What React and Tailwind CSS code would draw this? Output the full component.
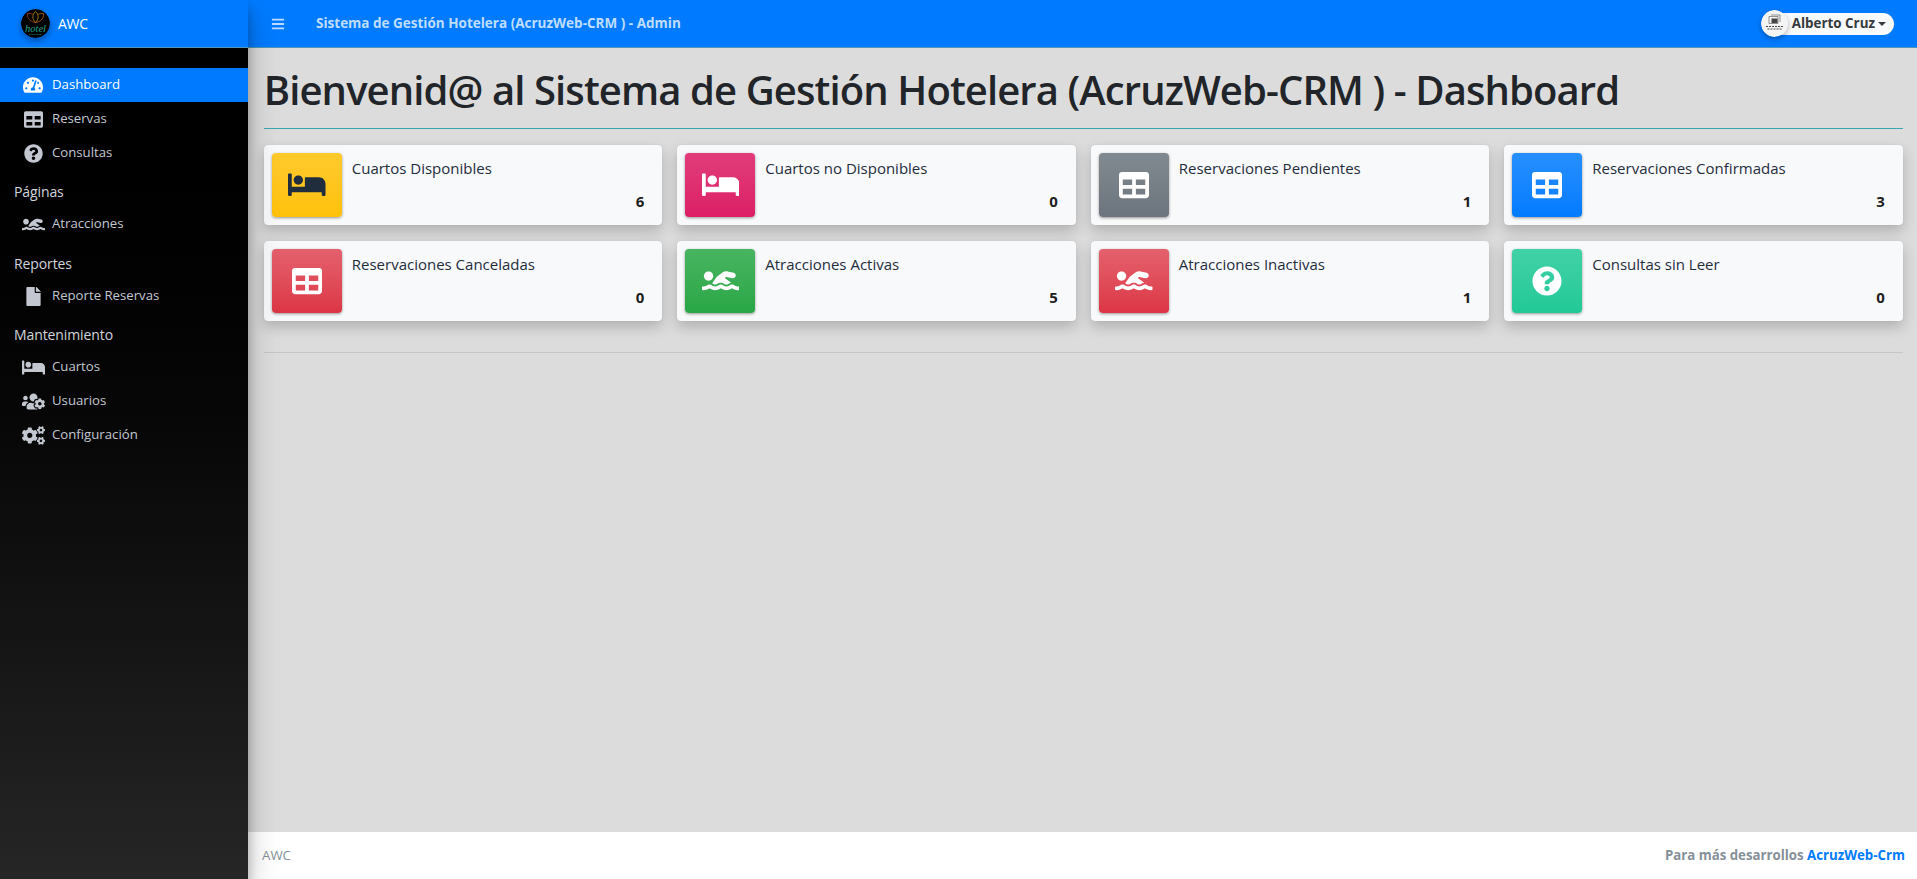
import React from 'react';
import {
  FaBars,
  FaBed,
  FaCogs,
  FaFile,
  FaQuestionCircle,
  FaSwimmer,
  FaTable,
  FaTachometerAlt,
  FaUsersCog,
} from 'react-icons/fa';

const sidebar = [
  { type: 'item', label: 'Dashboard', icon: FaTachometerAlt, size: 'text-[20px]', active: true },
  { type: 'item', label: 'Reservas', icon: FaTable, size: 'text-[19px]' },
  { type: 'item', label: 'Consultas', icon: FaQuestionCircle, size: 'text-[19px]' },
  { type: 'header', label: 'Páginas', height: 'h-[37px] pt-[11px]' },
  { type: 'item', label: 'Atracciones', icon: FaSwimmer, size: 'text-[23px]' },
  { type: 'header', label: 'Reportes', height: 'h-[38px] pt-[12px]' },
  { type: 'item', label: 'Reporte Reservas', icon: FaFile, size: 'text-[19px]' },
  { type: 'header', label: 'Mantenimiento', height: 'h-[37px] pt-[11px]' },
  { type: 'item', label: 'Cuartos', icon: FaBed, size: 'text-[23px]' },
  { type: 'item', label: 'Usuarios', icon: FaUsersCog, size: 'text-[23px]' },
  { type: 'item', label: 'Configuración', icon: FaCogs, size: 'text-[23px]' },
];

const cards = [
  { title: 'Cuartos Disponibles', value: 6, icon: FaBed, size: 'text-[37.5px]', box: 'from-[#ffca2c] to-[#ffc107] text-[#1f2d3d]' },
  { title: 'Cuartos no Disponibles', value: 0, icon: FaBed, size: 'text-[37.5px]', box: 'from-[#e23c7b] to-[#dc1e66] text-white' },
  { title: 'Reservaciones Pendientes', value: 1, icon: FaTable, size: 'text-[30px]', box: 'from-[#828a91] to-[#6c757d] text-white' },
  { title: 'Reservaciones Confirmadas', value: 3, icon: FaTable, size: 'text-[30px]', box: 'from-[#268fff] to-[#007bff] text-white' },
  { title: 'Reservaciones Canceladas', value: 0, icon: FaTable, size: 'text-[30px]', box: 'from-[#e4606d] to-[#dc3545] text-white' },
  { title: 'Atracciones Activas', value: 5, icon: FaSwimmer, size: 'text-[37.5px]', box: 'from-[#48b461] to-[#28a745] text-white' },
  { title: 'Atracciones Inactivas', value: 1, icon: FaSwimmer, size: 'text-[37.5px]', box: 'from-[#e4606d] to-[#dc3545] text-white' },
  { title: 'Consultas sin Leer', value: 0, icon: FaQuestionCircle, size: 'text-[30px]', box: 'from-[#41d1a7] to-[#20c997] text-white' },
];

const HotelLogo = () => (
  <svg viewBox="0 0 29 29" className="w-[29px] h-[29px] rounded-full shadow-[0_3px_6px_rgba(0,0,0,0.35)]">
    <circle cx="14.5" cy="14.5" r="14.5" fill="#000" />
    <path d="M14.5 2.5 C18 5.5 18 10 14.5 13.5 C11 10 11 5.5 14.5 2.5Z" fill="none" stroke="#d8a020" strokeWidth="0.7" />
    <path d="M14.5 13.5 C10 13 6 10 6.5 4.5 C8.5 4 10.5 4.5 12 5.5" fill="none" stroke="#c2452f" strokeWidth="0.7" />
    <path d="M14.5 13.5 C19 13 23 10 22.5 4.5 C20.5 4 18.5 4.5 17 5.5" fill="none" stroke="#d87a20" strokeWidth="0.7" />
    <text x="14.5" y="23" textAnchor="middle" fontSize="10.5" fontStyle="italic" fill="#1fa58d" fontFamily="'Liberation Serif', serif">hotel</text>
    <path d="M8 25.5h13" stroke="#1fa58d" strokeWidth="0.6" strokeDasharray="1 0.6" />
  </svg>
);

const Avatar = () => (
  <svg viewBox="0 0 27 27" className="w-[27px] h-[27px] rounded-full shadow-[0_2px_5px_rgba(0,0,0,0.3)] shrink-0 relative z-10">
    <circle cx="13.5" cy="13.5" r="13.5" fill="#f4f4f4" />
    <path d="M8 6.5h9v7H8z M10 5h9v7" fill="none" stroke="#666" strokeWidth="0.7" />
    <path d="M10.5 8.5h6v4.5h-6z" fill="#444" />
    <path d="M5 16.5h17M6.5 19h14" stroke="#444" strokeWidth="1" strokeDasharray="2 1" />
  </svg>
);

const Sidebar = () => (
  <aside className="w-[248px] shrink-0 flex flex-col bg-gradient-to-b from-[#000000] to-[#262626] shadow-[0_14px_28px_rgba(0,0,0,0.25),0_10px_10px_rgba(0,0,0,0.22)] z-10">
    <div className="h-[48px] bg-[#007bff] flex items-center pl-[21px] gap-2 border-b border-[#4b9ab8]">
      <HotelLogo />
      <span className="text-white text-[14px] tracking-[-0.3px]">AWC</span>
    </div>
    <nav className="pt-5 flex flex-col text-[13.2px]">
      {sidebar.map((entry) =>
        entry.type === 'header' ? (
          <div key={entry.label} className={`${entry.height} pl-[14px] leading-[21px] text-[14px] tracking-[-0.1px] text-[#d0d4db]`}>
            {entry.label}
          </div>
        ) : (
          <div
            key={entry.label}
            className={`h-[34px] flex items-center ${entry.active ? 'bg-[#007bff] text-white' : 'text-[#c2c7d0]'}`}
          >
            <span className={`w-[24px] ml-[21px] mr-[7px] flex justify-center shrink-0 ${entry.size}`}>
              <entry.icon />
            </span>
            <span className="-mt-[1px]">{entry.label}</span>
          </div>
        ),
      )}
    </nav>
  </aside>
);

const InfoCard = ({ title, value, icon: Icon, size, box }) => (
  <div className="h-[80px] rounded bg-[#f8f9fa] p-2 flex shadow-[0_0_1px_rgba(0,0,0,0.125),0_6px_14px_rgba(0,0,0,0.2)]">
    <div className={`w-[70px] h-[64px] shrink-0 rounded bg-gradient-to-b shadow-[0_1px_3px_rgba(0,0,0,0.4)] flex items-center justify-center ${size} ${box}`}>
      <Icon />
    </div>
    <div className="flex-1 pl-[10px] pr-[10px] flex flex-col text-[#1f2d3d]">
      <span className="text-[15px] leading-6 mt-[3px]">{title}</span>
      <span className="mt-auto text-right text-[15px] leading-[21px] font-bold text-black/90 mb-[5px]">{value}</span>
    </div>
  </div>
);

export default function App() {
  return (
    <div className="h-screen w-full flex overflow-hidden bg-[#dcdcdc] font-['Open_Sans','Noto_Sans',sans-serif] text-[#212529]">
      <Sidebar />
      <div className="flex-1 min-w-0 flex flex-col">
        <header className="h-[48px] shrink-0 bg-[#007bff] border-b border-[#4b9ab8] flex items-center pl-[23px] pr-[23px]">
          <FaBars className="text-white/75 text-[14px]" />
          <span className="ml-[31px] text-[13.5px] font-bold text-white/75">
            Sistema de Gestión Hotelera (AcruzWeb-CRM ) - Admin
          </span>
          <div className="ml-auto flex items-center">
            <Avatar />
            <div className="h-[22px] -ml-[8px] pl-[12px] pr-[8px] rounded-r-full bg-[#f8f9fa] flex items-center gap-[3px] text-[13.4px] font-bold text-[#343a40]">
              Alberto Cruz
              <span className="border-x-[4px] border-x-transparent border-t-[4px] border-t-[#343a40]" />
            </div>
          </div>
        </header>
        <main className="flex-1 pl-[15.75px] pr-[14.25px] min-h-0">
          <h1 className="text-[40px] leading-[48px] font-semibold mt-[18px] tracking-[-0.9px]">
            Bienvenid@ al Sistema de Gestión Hotelera (AcruzWeb-CRM ) - Dashboard
          </h1>
          <div className="h-px bg-[#3aa6b4] mt-[14px]" />
          <div className="grid grid-cols-4 gap-x-[15px] gap-y-4 mt-4">
            {cards.map((card) => (
              <InfoCard key={card.title} {...card} />
            ))}
          </div>
          <div className="h-px bg-[#c6c6c6] mt-[31px]" />
        </main>
        <footer className="h-[47px] shrink-0 bg-white flex items-center justify-between pl-[14px] pr-[12px] text-[13.25px] text-[#869099]">
          <span>AWC</span>
          <span className="font-bold">
            Para más desarrollos <span className="text-[#007bff]">AcruzWeb-Crm</span>
          </span>
        </footer>
      </div>
    </div>
  );
}
